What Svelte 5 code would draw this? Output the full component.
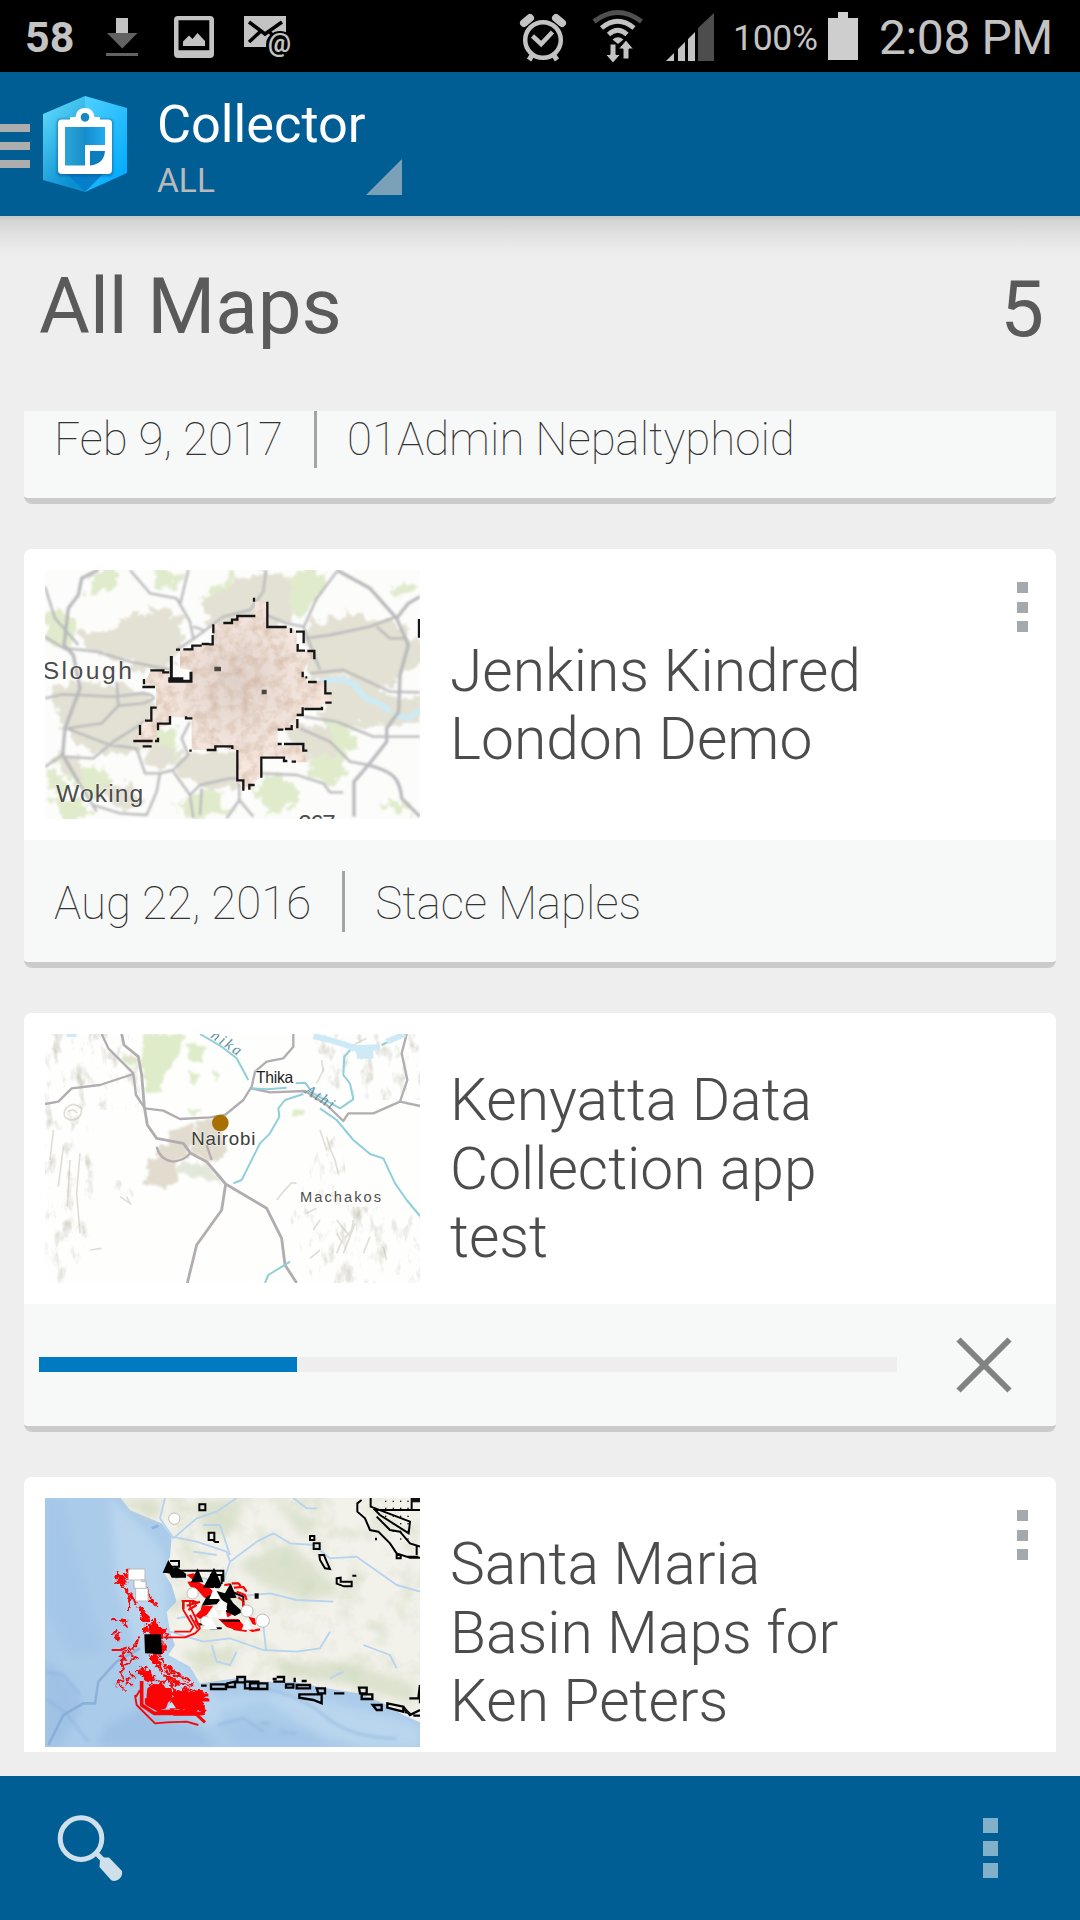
<script>
  const maps = [
    { title: 'Jenkins Kindred London Demo', date: 'Aug 22, 2016', owner: 'Stace Maples', thumb: 'london', menu: true },
    { title: 'Kenyatta Data Collection app test', progress: 30.07, thumb: 'nairobi' },
    { title: 'Santa Maria Basin Maps for Ken Peters', date: '', owner: '', thumb: 'basin', menu: true }
  ];
</script>

{#snippet london()}
  <svg class="thumb" viewBox="45 45 1125 747" preserveAspectRatio="none">
    <defs>
      <filter id="soft"><feGaussianBlur stdDeviation="2.5" /></filter>
      <filter id="rough" x="-5%" y="-5%" width="110%" height="110%" color-interpolation-filters="sRGB">
        <feTurbulence type="fractalNoise" baseFrequency="0.03" numOctaves="3" seed="4" result="n" />
        <feDisplacementMap in="SourceGraphic" in2="n" scale="65" xChannelSelector="R" yChannelSelector="G" />
        <feGaussianBlur stdDeviation="3" />
      </filter>
      <filter id="mottle" x="0" y="0" width="100%" height="100%" color-interpolation-filters="sRGB">
        <feTurbulence type="fractalNoise" baseFrequency="0.03" numOctaves="4" seed="9" result="n" />
        <feColorMatrix in="n" type="matrix" values="0 0 0 0 0.80  0 0 0 0 0.68  0 0 0 0 0.60  1.3 0 0 0 -0.5" />
        <feComposite in2="SourceGraphic" operator="in" result="m" />
        <feMerge><feMergeNode in="SourceGraphic" /><feMergeNode in="m" /></feMerge>
      </filter>
      <radialGradient id="core" gradientUnits="userSpaceOnUse" cx="620" cy="380" r="270"><stop offset="0" stop-color="#dfd1ca" /><stop offset=".6" stop-color="#f0e2da" /><stop offset="1" stop-color="#f7e8df" /></radialGradient>
    </defs>
    <rect x="45" y="45" width="1125" height="747" fill="#fcfcfb" />
    <g filter="url(#rough)">
      <g fill="#e0ebcc">
        <path d="M190 45h80l-20 60-80 20zM45 170l90 10 10 60-60 40-40-20zM380 50h90l-30 60-60-20zM510 130l100-80 20 30-90 90zM790 50l110 0-30 60-50 80-50-20zM1070 110l70-30 20 30-60 20zM120 640h90l60 60-60 40-80-50zM840 590l60-60 60 60-40 100-90-30zM430 750l120-50 60 70-120 30zM660 700l90-20 60 60-90 40zM60 730l90 0 40 60-90 20zM1040 740l100 10-20 40zM370 520h70v110l-80-20zM870 470l80 40 40 80-70-20zM710 650l80 30 20 60-90-20zM45 640l50 20 20 50-50 10z" />
      </g>
      <g fill="#e3e1d3">
        <path d="M300 185l90-35 60 40 10 80-50 90-90-20-130-50 30-60zM520 140l120-70 70-20 80 20-10 130-110 30-140-10zM820 215l130-40 120 20 100 60 20 30-50 60-100 70-90-60-120 10zM860 360l110 0 140 70 80 0-10 70-150 20-130-40zM60 395l120-15 140 20 70 70-40 110-120 20-100-40-50-70zM440 605l100-20 110 10 10 90-120 20-90-30zM70 590l60 10 30 60-60 10zM190 440l100 10 10 100-100-20zM220 690l90 0 30 60-80 10zM760 520l140-10 30 80-90 30zM1000 290l80-20 20 60-60 20zM900 400l100 60-30 60-100-40zM150 230l80 0-20 50-60-10zM350 560l90 20-20 60-70-10zM600 120l60-50 40 80-50 30z" />
      </g>
    </g>
    <g fill="none" stroke="#cdebf5" stroke-linecap="round" filter="url(#soft)">
      <path d="M870 382C930 365 970 375 990 410S1040 430 1075 465M1095 480L1135 490L1170 465" stroke-width="17" />
    </g>
    <g fill="none" stroke="#b9b9bc" stroke-linejoin="round" filter="url(#soft)">
      <path stroke-width="10" d="M205 45L155 70L145 120L115 160L102 270L130 300L150 400L105 520L98 600L145 680M920 45L1020 100L1100 190L1135 270L1110 360L1106 470L1070 520V560L1015 630L972 680V785M1015 630C1090 650 1110 670 1115 730L1170 785M1170 125L1135 145L1100 190" />
      <path stroke-width="7" d="M45 245L110 285M45 635L98 600M45 430L98 418L250 425L340 415Q375 420 370 432L340 445L265 452L215 505L110 520L240 570L320 580L345 655H390L430 645L475 600L455 550L480 500M300 45L360 115L440 130L480 200L490 250M475 45L450 150M708 45L700 110L660 165L580 185L500 245L440 285M820 220L860 130L920 50M708 180L770 205L820 215L870 345M825 250L900 240L1020 215L1100 185M1040 215L1080 250H1130M840 355L940 345L1080 410L1170 412M820 485L920 500L1030 545L1170 545M810 520L900 560L960 620L1015 630M110 280L200 290L300 320L420 345M98 605L190 610L250 560L360 490M265 452L260 380M390 655L380 710L350 780L270 775L190 750M145 680L200 770M430 650L480 720L510 690L600 670H640M480 720L490 790M515 700L510 780M628 680V735L590 790M628 735L670 785M690 655L800 660L880 685L900 712H940M490 215L520 225M45 95L75 190L145 270" />
    </g>
    <path filter="url(#mottle)" fill="url(#core)" d="M675 140H712V215H780L800 230V285L850 290V312H835L820 355L830 378H888V415H905V445H880L870 462H820V482H800L795 525H743V572H820L830 622H795L765 608H693V665L660 690L640 705L622 675V585H600L580 575L530 585H485V487H420V510L380 520V550L360 575L310 558L330 515L345 497L378 460V395H340L362 345H415V380H483V345L450 340V285L550 265V208L605 200L622 183H675Z" />
    <g fill="none" stroke="#151515" stroke-width="7">
      <path d="M672 128V140M676 183H622V194H606V204H580M550 208V235M548 240V268H538M538 267H515M515 272H487V283H460M450 284H438M712 140V216H770M783 220V234M798 230H821V265M803 267V287H825M832 288H853V313M818 350V367M826 367H832M834 381H860M886 376V415H905M905 443H886M876 455V462H823M818 457V480H800M802 492V520M785 510V522H765M760 524H743M762 567H820V587H832M755 567H743M694 668V608H762V618H772M785 620H798M674 690H658V704M640 707V676H622V585M607 582V574H556V585H530M485 587H478M487 490H468V484M420 483V506H384V526M384 548V558H375M365 574H338M368 558H310M330 510V540M345 497H364V458H380M375 396H337M342 372V388M361 346H400V352H418" />
      <path d="M424 303V380M415 379H483V350" stroke-width="9" /><path d="M415 373H460" stroke-width="12" />
      <path d="M553 342H573M695 411H710" stroke="#4d4543" stroke-width="14" /><path d="M1168 192V248" stroke-width="9" />
    </g>
    <g class="place" fill="#4c4c4c">
      <text x="38" y="371" font-size="74" textLength="268">Slough</text>
      <text x="78" y="742" font-size="74" textLength="262">Woking</text>
      <text x="805" y="830" font-size="72" textLength="112">267</text>
    </g>
  </svg>
{/snippet}

{#snippet nairobi()}
  <svg class="thumb" viewBox="45 42 1125 747" preserveAspectRatio="none">
    <defs>
      <filter id="haze"><feGaussianBlur stdDeviation="2" /></filter>
      <filter id="ragged" x="-5%" y="-5%" width="110%" height="110%" color-interpolation-filters="sRGB">
        <feTurbulence type="fractalNoise" baseFrequency="0.04" numOctaves="3" seed="2" result="n" />
        <feDisplacementMap in="SourceGraphic" in2="n" scale="30" xChannelSelector="R" yChannelSelector="G" />
        <feGaussianBlur stdDeviation="2.500" />
      </filter>
      <filter id="relief" x="0" y="0" width="100%" height="100%" color-interpolation-filters="sRGB">
        <feTurbulence type="fractalNoise" baseFrequency="0.03 0.015" numOctaves="4" seed="12" result="n" />
        <feColorMatrix in="n" type="matrix" values="0 0 0 0 0.70  0 0 0 0 0.69  0 0 0 0 0.62  2 0 0 0 -1.08" result="m" />
        <feComposite in="m" in2="SourceGraphic" operator="in" />
      </filter>
    </defs>
    <rect x="45" y="42" width="1125" height="747" fill="#fefefd" />
    <g opacity=".75"><path d="M45 42H330V270H190V620L120 789H45ZM850 42H1170V240H900ZM860 400L930 330L960 560H1170V789H850L780 600ZM250 480h60v90h-60z" filter="url(#relief)" /></g>
    <g filter="url(#ragged)">
      <path fill="#deecca" d="M335 42H465L445 110L410 150L390 220L350 215L335 150ZM470 70L530 80L510 130L480 120ZM470 150L510 165L490 195ZM275 100L320 110V140L280 130ZM540 150l30 10-10 30zM795 265l30 5-5 20-25-5zM470 270l40-5-10 25z" />
      <path fill="#e1dcce" d="M360 415H435L445 480L405 505L345 490ZM385 375H480L470 415L405 430L380 400ZM415 335L490 315V375H420ZM500 300H565L590 400L540 430L485 400ZM280 105l40 5v25z" />
      <path fill="#e3e8dc" d="M440 430L530 425L585 495L530 480L440 460Z" />
    </g>
    <g fill="none" stroke="#c2bfb2" stroke-width="5" opacity=".5" filter="url(#haze)"><path d="M105 270Q125 240 155 265Q155 300 125 300Q95 295 105 270M115 275Q130 262 142 280M740 540L760 515L785 488L800 490M890 350L900 385L915 420L925 460M870 330L890 390M970 600L965 630L945 655M920 640L935 665L920 700M270 530L300 550L290 530M180 690L215 685M860 190L880 150L875 120M1060 680L1070 720M830 580L860 565M1000 700L1020 650M1010 55L960 80M870 600L850 630M150 400L140 520L150 640M100 380L85 500M120 420L112 560M70 330L60 420M920 600L960 650L940 700L975 610M840 715L870 690" /></g>
    <g fill="none" stroke="#b1adb1" stroke-width="7" stroke-linejoin="round" filter="url(#haze)">
      <path d="M275 42L282 75L325 110L335 165L343 260L352 315L380 355L460 370L482 400L530 425L587 492L575 570L500 675L472 789M587 492L710 565L755 655L765 735L800 789" stroke-width="8.500" />
      <path d="M45 252L85 245L125 205L210 195L310 162M215 42L235 85L310 160L318 225L345 265L400 272L450 297L540 292L585 285L640 240L665 200L675 155L710 125L760 115L790 80V42M662 205L720 217L825 213L890 255L940 303L955 280H1030L1110 245L1170 258M1130 42L1115 100L1132 180L1110 245M380 380Q390 420 430 425Q465 420 480 400M530 375L545 420" />
    </g>
    <g fill="none" stroke="#8fcfd9" stroke-width="6" stroke-linejoin="round" filter="url(#haze)">
      <path d="M510 42L575 80L620 115L655 180M665 205L710 208L770 203M797 190L825 188L850 220L930 265L970 238L960 190L940 165L943 110L965 85M820 222L765 240L745 265L748 290L720 340L690 370L655 440L635 480L610 490M870 265L920 300L970 360L1020 402L1060 415L1095 490L1130 540L1170 588M705 789L715 765L780 725M1055 75L1090 58" />
      <path stroke="#cfeaf7" stroke-width="18" d="M850 48L900 60L980 85L1000 115M960 85L1050 82M1070 65L1125 42M110 42H140" />
      <path stroke="#cfeaf7" stroke-width="32" d="M980 100H1030" />
    </g>
    <g class="place" fill="#3c3c3c">
      <text x="678" y="188" font-size="47" textLength="112" fill="#1c1c1c">Thika</text>
      <text x="484" y="375" font-size="56" textLength="192">Nairobi</text>
      <text x="810" y="545" font-size="44" textLength="243" fill="#505050">Machakos</text>
    </g>
    <circle cx="571" cy="309" r="25" fill="#a87000" />
    <g class="river" fill="#5d8fa0">
      <text transform="translate(540 52) rotate(34)" font-size="46" textLength="100">hika</text>
      <text transform="translate(822 218) rotate(32)" font-size="46" textLength="95">Athi</text>
    </g>
  </svg>
{/snippet}

{#snippet basin()}
  <svg class="thumb" viewBox="45 39 1125 747" preserveAspectRatio="none">
    <defs>
      <filter id="blur6"><feGaussianBlur stdDeviation="12" /></filter>
      <filter id="blur2"><feGaussianBlur stdDeviation="2" /></filter>
      <filter id="blur4"><feGaussianBlur stdDeviation="4" /></filter>
      <filter id="jag" x="-10%" y="-10%" width="120%" height="120%" color-interpolation-filters="sRGB">
        <feTurbulence type="fractalNoise" baseFrequency="0.07" numOctaves="2" seed="7" result="n" />
        <feDisplacementMap in="SourceGraphic" in2="n" scale="28" xChannelSelector="R" yChannelSelector="G" />
      </filter>
      <filter id="terrain" x="0" y="0" width="100%" height="100%" color-interpolation-filters="sRGB">
        <feTurbulence type="fractalNoise" baseFrequency="0.012" numOctaves="4" seed="5" result="n" />
        <feColorMatrix in="n" type="matrix" values="0 0 0 0 0.84  0 0 0 0 0.87  0 0 0 0 0.78  1.8 0 0 0 -0.85" />
        <feComposite in2="SourceGraphic" operator="in" result="m" />
        <feMerge><feMergeNode in="SourceGraphic" /><feMergeNode in="m" /></feMerge>
      </filter>
    </defs>
    <rect x="45" y="39" width="1125" height="747" fill="#abcbea" />
    <g filter="url(#blur6)">
      <path fill="#b9d6ee" d="M240 39L340 130L400 200L420 500L500 570L560 640L780 620L1170 720V786H1000L700 700L520 720L350 560L260 300Z" />
      <path fill="#96bbe1" d="M45 520L130 600L160 660L90 786H45ZM200 786L230 720L330 670L500 730L560 786Z" opacity=".6" />
      <path fill="#a0c3e6" d="M560 680L700 640L860 740L880 786H620ZM45 39H100L180 340L230 500L120 520L45 380Z" opacity=".5" />
    </g>
    <g fill="none" stroke="#80a8d4" stroke-width="8" filter="url(#blur2)" opacity=".7"><path d="M55 780L100 690L160 655H195L205 590L260 530L330 490M365 130l20-8" /></g>
    <g fill="none" stroke="#86add8" stroke-width="7" filter="url(#blur4)" opacity=".5"><path d="M45 560L100 570L150 630M250 600L340 560L400 600M640 600Q800 620 880 690T1100 760M690 715h30M750 740l50 5M45 640l60 40 70 90M560 720L640 700L700 740" /></g>
    <path filter="url(#terrain)" fill="#f2f1ea" d="M272 39L300 75L370 105L395 115L425 155L420 215L400 260L425 300L440 350L410 380L420 440L435 480L415 510L480 545L510 595L620 580L700 590L790 590L890 610L985 625L1060 655L1120 690L1170 712V39Z" />
    <g filter="url(#blur6)" fill="#d0dabf" opacity=".65"><path d="M280 39H380L400 80L370 105L310 70ZM620 240L780 170L860 250L940 320L830 350L700 300ZM450 500L600 490L620 540L500 550ZM720 530L980 540L1160 600L1150 660L960 600L760 570ZM490 50L640 40L620 130L520 150ZM740 60L880 110L820 160Z" /></g>
    <g fill="none" stroke="#b6d3ef" stroke-width="5.500" stroke-linejoin="round" filter="url(#blur2)">
      <path d="M405 39L390 100L430 160L500 100L560 80L620 39M600 210L570 120L520 120M425 155L500 170L590 200L600 230L680 170L730 145L780 175L850 180L900 220L980 215L1100 300L1170 320M600 230L580 290M620 335L720 325L800 345L910 350M435 280L480 270L560 290M440 400L500 390M420 440L520 470L600 460L700 495L800 500L870 490L900 440M700 420L708 495M545 480L560 530L600 540L620 500M790 39L830 70L860 70M490 200L560 210M900 580L940 560M1000 480L1080 510L1100 550" />
    </g>
    <g fill="none" stroke="#000" stroke-width="6">
      <path d="M508 58H526V76H508ZM536 143H553V165H536ZM548 165L556 171H567M840 153H853V165H840ZM851 175H869V192H851ZM868 210H882L890 230L900 252L885 250L870 225ZM920 280L932 278V290H965V304H942L920 296ZM967 272H979" />
      <path d="M680 325V341" stroke-width="12" />
      <path d="M995 45L982 55V80L1005 100L1020 135L1045 140L1080 175L1100 205L1140 218H1170M1022 39V65L1140 110L1136 145L1050 90L1025 65M1040 95L1080 135L1110 140L1140 175L1170 185M1040 75H1170M1100 210H1112V220H1100ZM1127 215H1165M1145 39V72M1160 180V210M1038 158V166" />
      <path d="M513 602H530M543 598H588V612H543ZM592 595L615 590V606H592ZM622 576H645V592H622ZM645 590H685V610H645ZM660 595H712V612H660ZM728 582H740M740 576H762V590H730M768 598H790V608H768ZM794 578V592M800 600H840V610H800ZM808 628H875V655L850 645L808 638ZM860 610H885V625H865ZM815 588H830M912 625H943M987 608H1010V625H990ZM995 628H1027V642H995ZM1028 660H1055V675H1040ZM1072 655L1120 665V680L1072 668ZM1120 665L1140 690L1170 675M1138 640H1165L1170 600M1150 692H1170M1170 625V655" stroke-width="7" />
      <path d="M410 257H580V290M420 228H447V245H420M600 318L640 335V365M460 345V372M485 355h15M500 418H520M540 430H575M540 270H575V297" />
    </g>
    <g fill="#111"><path d="M1143 39H1170V52H1143ZM1120 665l30 25-25-5z" />
      {#each [1065, 1088, 1110, 1132] as x}
        {#each [47, 68, 92, 114, 137, 160] as y}
          {#if x > 980 + y * .75}<rect {x} {y} width="4" height="4" />{/if}
        {/each}
      {/each}
    </g>
    <g fill="none" stroke="#fa0505" stroke-linejoin="bevel" stroke-width="6.500">
      <g filter="url(#jag)">
        <path d="M258 262L265 290L285 312L305 330L320 360M350 310L360 340L380 362M305 330L298 352L292 375M245 405H262M270 408L292 405L285 422M262 430L252 450L262 466L268 440M345 420L400 440L415 460M275 495L310 490L330 455M265 515L300 500L320 520L285 540L275 510L278 580L262 600L285 612M295 580L290 600L312 590M375 530L410 580L450 600M345 545L390 600L420 575L450 595L490 602M390 520L430 560L450 572M330 545L345 580L375 590M400 540L415 565L440 570L480 585M320 560L350 570L360 600M420 590L440 620L480 610L500 625M300 560L315 580" />
        <path fill="#fa0505" stroke-width="5" d="M256 262L262 295L292 296L275 275ZM280 270L292 258V283ZM328 360L345 380L360 408H338ZM375 400L385 430L408 432L395 460L365 455L358 430ZM335 425L355 435L345 445ZM385 480L405 485L395 510H370ZM360 510L380 515L392 545L370 535ZM325 555L360 560L370 590L350 585ZM400 470L406 500L396 505Z" />
        <path fill="#fa0505" d="M430 618L455 625L470 618L490 625L520 618L530 640L515 645L522 685L500 680L425 672Z" />
      </g>
      <path fill="#fa0505" stroke="none" d="M472 290L500 288L540 310L560 330L540 350L520 335L505 318L480 304ZM515 362H550L530 390L510 402L495 392L512 375ZM565 402H625L650 432L620 436L590 426ZM655 395L675 400L678 420L668 418ZM588 372L605 390L590 398ZM408 262L445 275L490 265L510 275V292L490 286L470 270L440 278Z" />
      <path d="M605 295H625L632 303M612 308L640 306L650 320M620 320L645 330L650 345M625 337L640 348M583 300L600 298M650 428L668 438L690 433M610 432L650 438M455 348H490L505 355M470 362L510 350M475 375L500 360M495 405L510 425M640 350V365" />
      <path d="M400 457H465L495 445L510 430L495 395L480 365V348M433 440H480L490 425L460 375V345M503 432L480 390M315 630L320 660L375 715L410 712L470 710L505 720M318 635L330 615M245 495H275L290 487" stroke-width="5.500" />
      <path d="M335 588V660L372 685H520M350 640V655L395 680H500" stroke-width="11" />
      <path d="M490 680L525 712M430 688H500M515 645H538M520 630H535M520 660V690" stroke-width="9" />
      <path d="M355 612L372 600L398 602L405 612H422L425 640L412 650L405 668L385 672L365 662L352 645Z" fill="#fa0505" />
    </g>
    <path d="M425 650L438 670H412Z" fill="#cfe2f2" />
    <g fill="#000">
      <path d="M398 263L415 225L430 250L440 245L468 266V278H425L418 265ZM483 292L503 250L520 292ZM519 308L535 280L552 248L562 270L575 300L568 310ZM560 318L585 325L602 295L620 338L600 340L610 355L638 380L615 393L588 380L592 355L575 345ZM515 362L530 335L545 328L570 345L560 358Z" />
      <path d="M343 448H393L396 508L345 505Z" /><path d="M575 405H630V410H575Z" />
    </g>
    <g fill="#fff" stroke="#bbb" stroke-width="3">
      <path d="M300 252H345V285H335V290H350V310H354V348H317V310H312L310 285H295V258ZM312 285H348V310H312Z" />
      <circle cx="433" cy="101" r="17" /><circle cx="488" cy="325" r="17" /><circle cx="651" cy="378" r="18" /><circle cx="698" cy="407" r="20" /><circle cx="526" cy="408" r="14" />
      <path d="M553 305L568 342H538ZM575 342L592 375H560ZM550 365L567 395H533ZM580 370L595 402H565ZM540 390L562 432H518ZM650 398L665 434H635Z" stroke="none" />
    </g>
  </svg>
{/snippet}

<div class="screen">
  <div class="status">
    <span class="temp">58</span>
    <svg class="notes" width="190" height="72" viewBox="104 0 190 72" fill="#c3c3c3">
      <path d="M116 18h12v15.500h-12z" /><path d="M107 33h30.500l-15.200 15.500zM106 53h32v3h-32z" fill="#626262" />
      <path fill-rule="evenodd" d="M178 16h32q4 0 4 4v34q0 4-4 4h-32q-4 0-4-4V20q0-4 4-4zm.5 4.300v30h30.800v-30zM183 46V41.500l6-6 3.500 3.500 5-6 7.500 8V46z" />
      <path d="M244 16h42v31h-42z" /><path d="M249 22l16 12 17-12M249 42l12-11M274 36l-6-5" fill="none" stroke="#000" stroke-width="3.500" />
      <circle cx="280" cy="45" r="14" fill="#000" />
      <text x="268" y="52" class="at" textLength="23" lengthAdjust="spacingAndGlyphs">@</text>
    </svg>
    <svg class="signals" width="204" height="72" viewBox="516 0 204 72" fill="#c3c3c3">
      <circle cx="543" cy="40" r="17.800" fill="none" stroke="#c3c3c3" stroke-width="4.500" />
      <path d="M532.500 36l8.700 8 11.300-12" fill="none" stroke="#c3c3c3" stroke-width="4.500" />
      <path d="M524 23l6-5M562 23l-6-5" stroke="#c3c3c3" stroke-width="8" stroke-linecap="round" />
      <path d="M533 54l-4 6M553 54l4 6" stroke="#c3c3c3" stroke-width="5" />
      <g fill="none" stroke="#c3c3c3" stroke-width="4.800">
        <path d="M594 21.500Q617.700 3.500 641.500 21.500" stroke="#505050" /><path d="M601.500 28Q617.700 14.500 634 28" /><path d="M608.500 34.500Q617.700 26 627 34.500" />
      </g>
      <path d="M612.500 39.500q5.500-4.500 11 0l-5.500 4.500z" />
      <path d="M610 44h6v10.500h4.500L613 63l-7.500-8.500h4.500zM623 59h6V49h4.500L626 40l-7.500 9h4.500z" stroke="#000" stroke-width="1" />
      <path d="M666 61l8-8v8zM678 61V49l7-7v19zM688 61V39l7-7v29z" /><path d="M698 61V28l16-15v48z" fill="#4d4d4d" />
    </svg>
    <span class="pct">100%</span>
    <svg class="battery" width="30" height="48" viewBox="0 0 30 48"><path d="M0 6h10V0h10v6h10v42H0z" fill="#cecece" /></svg>
    <span class="clock">2:08 PM</span>
  </div>

  <header>
    <svg class="logo" width="130" height="144" viewBox="0 72 130 144">
      <defs>
        <linearGradient id="lf" x1="0" y1="0" x2=".5" y2="1"><stop offset="0" stop-color="#64e0ff" /><stop offset="1" stop-color="#0a8fd0" /></linearGradient>
        <linearGradient id="rt" x1="0" y1="0" x2=".6" y2="1"><stop offset="0" stop-color="#4fd0ff" /><stop offset="1" stop-color="#05adff" /></linearGradient>
        <linearGradient id="in"><stop offset="0" stop-color="#2ba6d6" /><stop offset=".48" stop-color="#1a8fca" /><stop offset=".49" stop-color="#128bce" /><stop offset="1" stop-color="#25aeef" /></linearGradient>
        <filter id="sh"><feGaussianBlur stdDeviation="1.600" /></filter>
      </defs>
      <path d="M0 124h30v8H0zM0 142h30v8H0zM0 160h30v8H0z" fill="#adadad" />
      <path d="M85 96v96l-42-12v-66z" fill="url(#lf)" /><path d="M85 96l42 12v65l-42 19z" fill="url(#rt)" />
      <path d="M66 173h38l-19 19z" fill="#067fca" />
      <rect x="57" y="119" width="56" height="57" rx="4" fill="#07588f" opacity=".65" filter="url(#sh)" />
      <rect x="64" y="126" width="42" height="41" fill="url(#in)" />
      <path fill="#fff" fill-rule="evenodd" d="M62 119.500h8v-2.500h5.500q1-9 9.500-9t9.500 9h5.500v2.500h8q4 0 4 4V170q0 4-4 4H62q-4 0-4-4v-46.500q0-4 4-4zM65 127v38.500h20V145h20v-18zm20-14a4.200 4.200 0 1 0 .1 0z" />
      <circle cx="85" cy="117.200" r="4.200" fill="#1a86c0" />
      <path d="M90 151h15q-1 13-15 14.500z" fill="#0b7dbd" />
    </svg>
    <div class="spinner">
      <div class="names"><div class="app">Collector</div><div class="filter">ALL</div></div>
      <svg class="tri" width="36" height="36" viewBox="0 0 36 36"><path d="M36 0v36H0z" fill="#7aa1b8" /></svg>
    </div>
  </header>

  <main>
    <div class="heading"><h1>All Maps</h1><span>5</span></div>
    <div class="list">
      <section class="card scrolled">
        <div class="foot"><span>Feb 9, 2017</span><i></i><span>01Admin Nepaltyphoid</span></div>
      </section>
      {#each maps as map}
        <section class="card">
          <div class="top">
            {#if map.thumb === 'london'}{@render london()}{:else if map.thumb === 'nairobi'}{@render nairobi()}{:else}{@render basin()}{/if}
            <h2>{map.title}</h2>
            {#if map.menu}<div class="dots"><b></b><b></b><b></b></div>{/if}
          </div>
          <div class="foot">
            {#if map.progress}
              <div class="track"><div class="fill" style="width:{map.progress}%"></div></div>
              <svg class="close" width="56" height="56" viewBox="0 0 56 56"><path d="M2.500 2.500l51 51M53.500 2.500l-51 51" stroke="#828282" stroke-width="6" /></svg>
            {:else if map.date}
              <span>{map.date}</span><i></i><span>{map.owner}</span>
            {/if}
          </div>
        </section>
      {/each}
    </div>
  </main>

  <footer>
    <svg width="68" height="68" viewBox="56 1814 68 68">
      <circle cx="81" cy="1838.600" r="20.800" fill="none" stroke="#cfe0ea" stroke-width="5" />
      <path d="M95 1852l8 8" stroke="#cfe0ea" stroke-width="5" />
      <path d="M100 1860.500l3.500-3h5.500l13 13.500q1 5-3.500 8.500-4 2.500-7.500.5L99.500 1867z" fill="#cfe0ea" />
    </svg>
    <div class="dots big"><b></b><b></b><b></b></div>
  </footer>
</div>

<style>
  :global(body) { margin: 0; background: #eee; }
  .screen { width: 1080px; height: 1920px; display: flex; flex-direction: column; overflow: hidden; background: #eee; font-family: Roboto, "Liberation Sans", sans-serif; }
  svg { display: block; flex: none; }
  .status { height: 72px; flex: none; background: #000; color: #c3c3c3; display: flex; align-items: flex-start; white-space: nowrap; }
  .temp { width: 78px; padding-left: 25px; font-size: 43px; font-weight: 700; line-height: 74px; box-sizing: border-box; }
  .notes { margin-left: 26px; }
  .at { font: 700 26px Roboto, sans-serif; }
  .signals { margin-left: 222px; }
  .pct { width: 96px; margin-left: 13px; font-size: 35.500px; letter-spacing: -.3px; line-height: 77px; }
  .battery { margin-top: 12px; margin-left: -1px; }
  .clock { margin-left: 21px; font-size: 48px; letter-spacing: -.4px; line-height: 76px; }
  header { height: 144px; flex: none; background: #005e95; display: flex; }
  .spinner { margin-left: 27px; width: 245px; display: flex; justify-content: space-between; align-items: flex-end; }
  .names { width: 208px; height: 144px; white-space: nowrap; }
  .app { font-size: 52.300px; line-height: 60px; margin-top: 22px; color: #fff; }
  .filter { font-size: 33.500px; line-height: 40px; margin-top: 7px; color: #b9b9b9; }
  .tri { margin-bottom: 21px; }
  main { height: 1560px; display: flex; flex-direction: column; background: linear-gradient(#c6c6c6 0, #d5d5d5 5px, #e1e1e1 18px, #eaeaea 32px, #eee 42px); }
  .heading { height: 195px; display: flex; justify-content: space-between; padding: 0 36px 0 39px; box-sizing: border-box; color: #5a5a5a; font-size: 78px; line-height: 92px; }
  h1 { margin: 45px 0 0; font: inherit; }
  .heading span { margin-top: 48px; }
  .list { height: 1341px; overflow: hidden; display: flex; flex-direction: column; gap: 45px; padding: 0 24px; }
  .card { flex: none; border-radius: 8px; background: #fff; border-bottom: 6px solid #cbcbcb; overflow: hidden; }
  .scrolled { margin-top: -35px; }
  .top { height: 291px; padding: 21px 28px 0 21px; box-sizing: border-box; display: flex; align-items: flex-start; }
  .thumb { width: 375px; height: 249px; }
  h2 { width: 440px; min-height: 210px; margin: 30px 0 0 30px; display: flex; align-items: center; font-size: 58.750px; line-height: 68.500px; font-weight: 300; color: #4c4c4c; }
  .foot { height: 122px; background: #f7f9f8; display: flex; align-items: center; padding-left: 30px; font-size: 45.650px; font-weight: 100; color: #333; white-space: nowrap; }
  .foot span { padding-top: 4px; }
  .foot i { width: 3px; height: 61px; background: #a2a5a5; margin: 0 30px 0 31px; }
  .dots { margin: 12px 0 0 auto; display: flex; flex-direction: column; gap: 8.500px; }
  .dots b { display: block; width: 11px; height: 11px; background: #a4a9ad; }
  .track { width: 858px; height: 15px; margin-left: -15px; margin-top: -1px; background: #eee; }
  .fill { height: 100%; background: #007ac2; }
  .close { margin-left: 59px; }
  footer { height: 144px; flex: none; background: #005e95; display: flex; justify-content: space-between; align-items: flex-start; padding: 38px 82px 0 56px; box-sizing: border-box; }
  .dots.big { margin: 4px 0 0; gap: 7.500px; }
  .dots.big b { width: 15px; height: 15px; background: #80b0ca; }
  .place { font-family: "Liberation Sans", sans-serif; paint-order: stroke; stroke: #fff; stroke-opacity: .6; stroke-width: 4px; }
  .river { font-family: "Liberation Serif", serif; font-style: italic; }
</style>
